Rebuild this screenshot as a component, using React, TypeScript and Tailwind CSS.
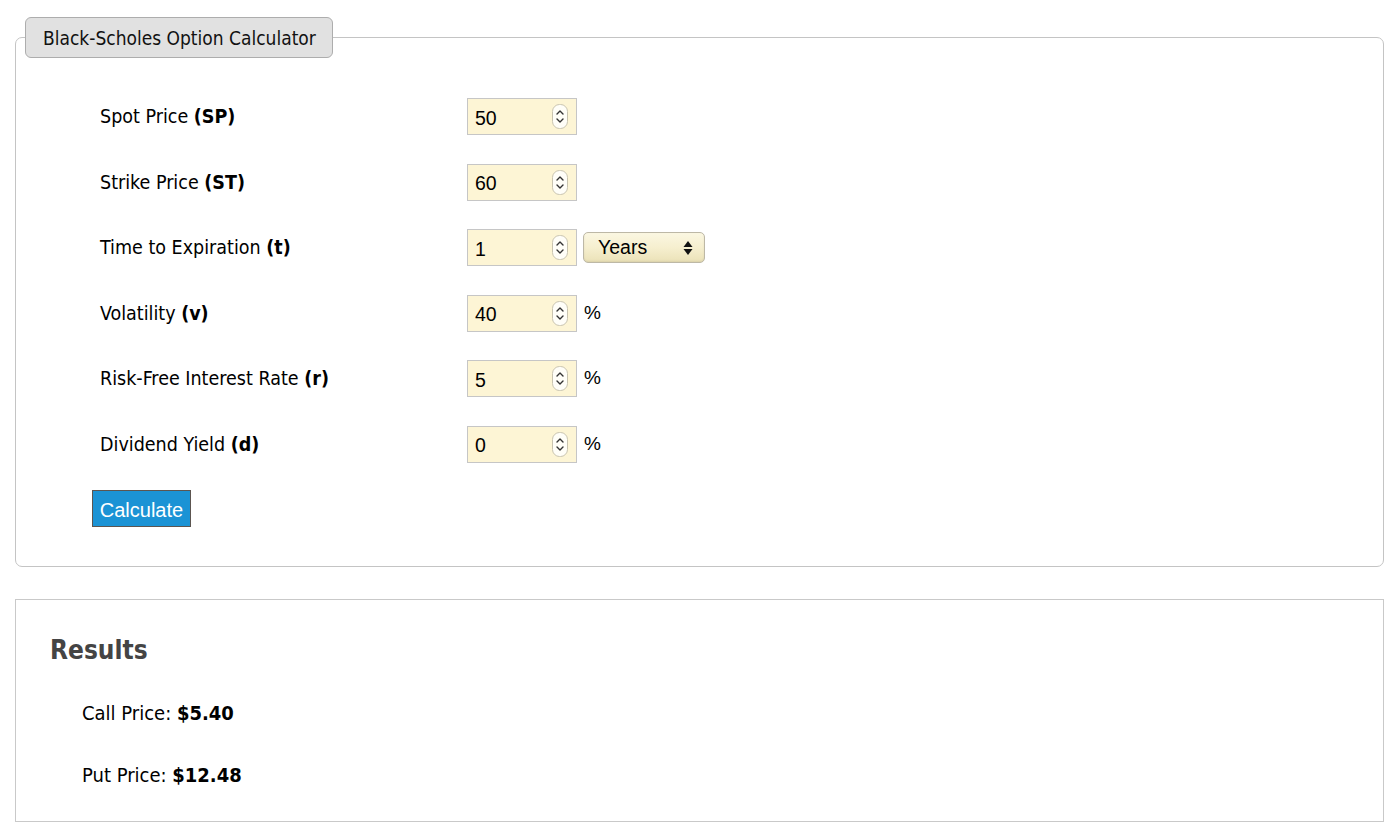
import React from 'react';

const tahoma = { fontFamily: '"DejaVu Sans Condensed", "DejaVu Sans", sans-serif' };

const fields = [
  { label: 'Spot Price', sym: '(SP)', value: '50', suffix: null },
  { label: 'Strike Price', sym: '(ST)', value: '60', suffix: null },
  { label: 'Time to Expiration', sym: '(t)', value: '1', suffix: 'select' },
  { label: 'Volatility', sym: '(v)', value: '40', suffix: '%' },
  { label: 'Risk-Free Interest Rate', sym: '(r)', value: '5', suffix: '%' },
  { label: 'Dividend Yield', sym: '(d)', value: '0', suffix: '%' },
];

function Spinner() {
  return (
    <svg width="16" height="25" viewBox="0 0 16 25" className="shrink-0">
      <rect x="0.5" y="0.5" width="15" height="24" rx="7" fill="#fffef8" stroke="#c9c4b0" />
      <path d="M5 10 L8 7 L11 10" fill="none" stroke="#333" strokeWidth="1.4" strokeLinecap="round" strokeLinejoin="round" />
      <path d="M5 15 L8 18 L11 15" fill="none" stroke="#333" strokeWidth="1.4" strokeLinecap="round" strokeLinejoin="round" />
    </svg>
  );
}

function NumberBox({ value }: { value: string }) {
  return (
    <div className="flex h-[37px] w-[110px] items-center justify-between border border-[#c6c6c6] bg-[#fdf5d5] pl-[7px] pr-[8px] font-['Liberation_Sans',sans-serif] text-[19.5px] text-black">
      <span className="pt-[3px]">{value}</span>
      <Spinner />
    </div>
  );
}

function YearsSelect() {
  return (
    <div className="flex h-[31px] w-[122px] items-center justify-between rounded-[5px] border border-[#bdb8a6] bg-gradient-to-b from-[#fbf7e2] via-[#f6efcf] to-[#ebe2b8] pl-[14px] pr-[11px] font-['Liberation_Sans',sans-serif] text-[19.5px] text-black shadow-[inset_0_-1px_2px_rgba(0,0,0,0.08)]">
      <span>Years</span>
      <svg width="10" height="16" viewBox="0 0 10 16">
        <path d="M5 1 L9.5 7 H0.5 Z" fill="#111" />
        <path d="M5 15 L9.5 9 H0.5 Z" fill="#111" />
      </svg>
    </div>
  );
}

export default function App() {
  return (
    <div className="min-h-[835px] bg-white pt-[17px]" style={tahoma}>
      <fieldset className="ml-[15px] mr-[16px] rounded-[7px] border border-[#c4c4c4] px-0 pb-[39px]">
        <legend className="ml-[9px] h-[41px] w-[308px] rounded-[6px] border border-[#adadad] bg-[#e1e1e1] pl-[17px] text-[19px] leading-[41px] text-[#111]">
          Black-Scholes Option Calculator
        </legend>
        <div className="pl-[84px] pt-[26px]">
          {fields.map((f) => (
            <div key={f.label} className="flex h-[65.5px] items-center">
              <div className="w-[367px] text-[19.5px] text-black">
                {f.label} <b>{f.sym}</b>
              </div>
              <NumberBox value={f.value} />
              {f.suffix === 'select' && (
                <div className="ml-[6px]">
                  <YearsSelect />
                </div>
              )}
              {f.suffix === '%' && (
                <span className="ml-[7px] -mt-[1px] font-['Liberation_Sans',sans-serif] text-[19px] text-black">%</span>
              )}
            </div>
          ))}
          <button className="-ml-[8px] mt-[13px] h-[37px] w-[99px] border border-[#5c5550] bg-[#1b93d5] pt-[2px] font-['Liberation_Sans',sans-serif] text-[20px] text-white">
            Calculate
          </button>
        </div>
      </fieldset>

      <div className="ml-[15px] mr-[16px] mt-[32px] h-[223px] border border-[#c9c9c9] pl-[34px] pt-[33px]">
        <h2 className="text-[26px] font-bold leading-[34px] text-[#444]">Results</h2>
        <div className="pl-[32px] pt-[34px] text-[20px] text-black">
          <p className="leading-[24px]">
            Call Price: <b>$5.40</b>
          </p>
          <p className="mt-[38px] leading-[24px]">
            Put Price: <b>$12.48</b>
          </p>
        </div>
      </div>
    </div>
  );
}
